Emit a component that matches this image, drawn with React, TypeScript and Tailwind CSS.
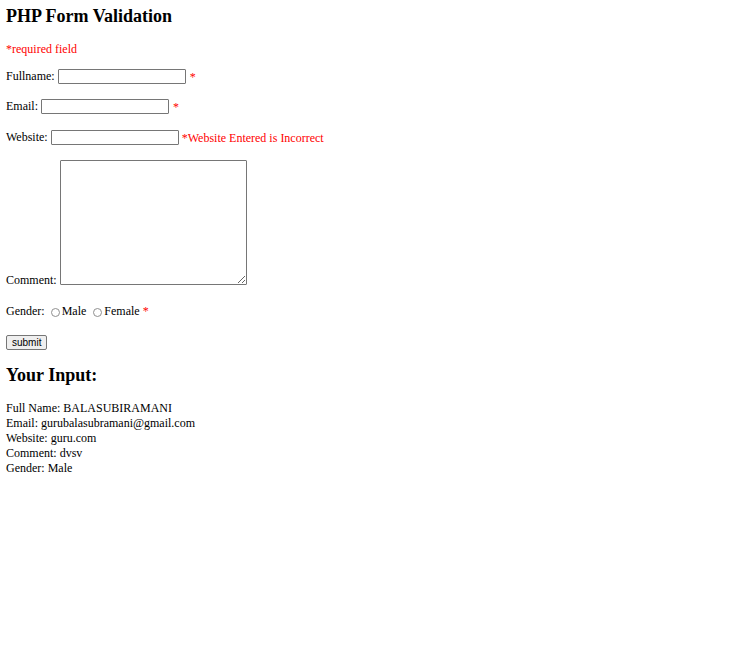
import React from 'react';

const Req = ({ children = '*' }: { children?: React.ReactNode }) => (
  <span className="text-[#ff0000]">{children}</span>
);

const TextInput = ({ w = 'w-[128px]' }: { w?: string }) => (
  <input
    type="text"
    className={`${w} h-[15px] border border-[#767676] bg-white rounded-[1px] px-[1px] text-[10px] outline-none`}
  />
);

const Radio = () => (
  <span className="inline-block w-[9px] h-[9px] rounded-full border border-[#8f8f8f] bg-white ml-[3px] mr-[2px] mt-[1px]" />
);

export default function App() {
  return (
    <div
      className="min-h-screen bg-white text-black pl-[6px] pt-[6px] text-[12px] leading-[15px]"
      style={{ fontFamily: '"Liberation Serif", "Times New Roman", serif' }}
    >
      <h2 className="text-[18px] leading-[21px] font-bold">PHP Form Validation</h2>

      <p className="mt-[15px] text-[#ff0000]">*required field</p>

      <form className="flex flex-col" onSubmit={(e) => e.preventDefault()}>
        <div className="mt-[12px] h-[15px] flex items-center">
          <span>Fullname:</span>
          <span className="ml-[3px] flex"><TextInput /></span>
          <span className="ml-[4px] mt-[1px]"><Req /></span>
        </div>

        <div className="mt-[15px] h-[15px] flex items-center">
          <span>Email:</span>
          <span className="ml-[3px] flex"><TextInput /></span>
          <span className="ml-[4px] mt-[1px]"><Req /></span>
        </div>

        <div className="mt-[16px] h-[15px] flex items-center">
          <span>Website:</span>
          <span className="ml-[3px] flex"><TextInput /></span>
          <span className="ml-[3px] mt-[1px]"><Req>*Website Entered is Incorrect</Req></span>
        </div>

        <div className="mt-[15px] flex items-end">
          <span className="mb-[-3px]">Comment:</span>
          <textarea className="ml-[3px] w-[187px] h-[125px] border border-[#767676] bg-white rounded-[1px] outline-none resize block" />
        </div>

        <div className="mt-[19px] h-[15px] flex items-center">
          <span>Gender:</span>
          <span className="ml-[3px] flex"><Radio /></span>
          <span>Male</span>
          <span className="ml-[4px] flex"><Radio /></span>
          <span>Female</span>
          <span className="ml-[3px]"><Req /></span>
        </div>

        <div className="mt-[16px] flex">
          <button
            type="submit"
            className="h-[15px] px-[5px] text-[10px] leading-[13px] bg-[#efefef] border border-[#767676] rounded-[2px] text-black"
            style={{ fontFamily: '"Liberation Sans", Arial, sans-serif' }}
          >
            submit
          </button>
        </div>
      </form>

      <h2 className="mt-[15px] text-[18px] leading-[21px] font-bold">Your Input:</h2>

      <div className="mt-[15px]">
        <div>Full Name: BALASUBIRAMANI</div>
        <div>Email: gurubalasubramani@gmail.com</div>
        <div>Website: guru.com</div>
        <div>Comment: dvsv</div>
        <div>Gender: Male</div>
      </div>
    </div>
  );
}
